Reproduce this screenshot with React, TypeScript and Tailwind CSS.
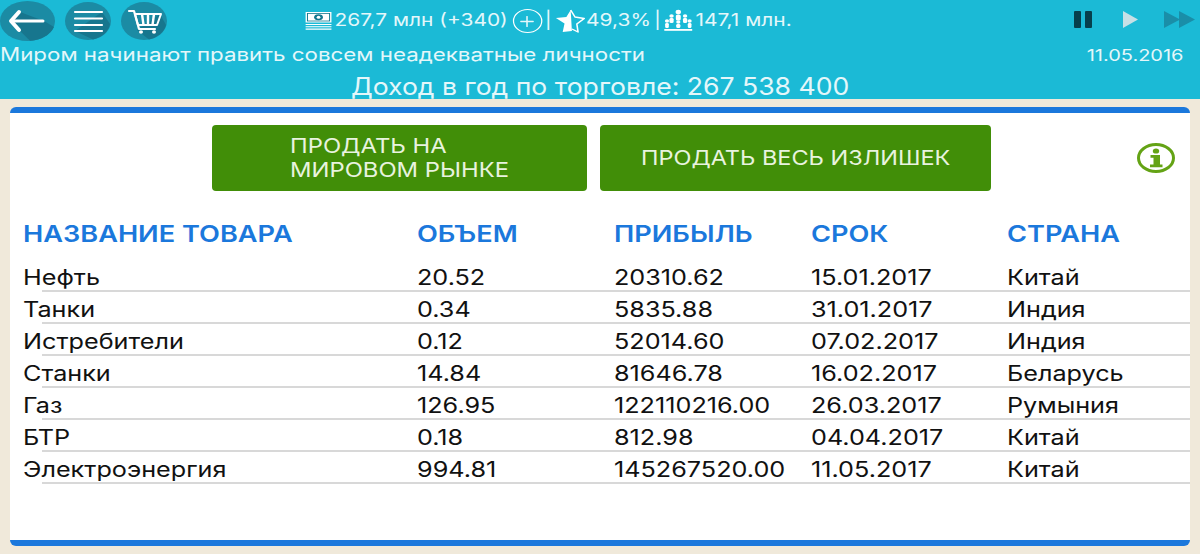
import { Plus } from 'lucide-react';

const rows = [
    ['Нефть', '20.52', '20310.62', '15.01.2017', 'Китай'],
    ['Танки', '0.34', '5835.88', '31.01.2017', 'Индия'],
    ['Истребители', '0.12', '52014.60', '07.02.2017', 'Индия'],
    ['Станки', '14.84', '81646.78', '16.02.2017', 'Беларусь'],
    ['Газ', '126.95', '122110216.00', '26.03.2017', 'Румыния'],
    ['БТР', '0.18', '812.98', '04.04.2017', 'Китай'],
    ['Электроэнергия', '994.81', '145267520.00', '11.05.2017', 'Китай'],
];

const headers = ['НАЗВАНИЕ ТОВАРА', 'ОБЪЕМ', 'ПРИБЫЛЬ', 'СРОК', 'СТРАНА'];

function BackButton() {
    return (
        <svg viewBox="0 0 55 40" className="h-[40px] w-[55px]">
            <ellipse cx="27.500" cy="20" rx="27.500" ry="20" fill="#1b8ba4" />
            <path d="M20 11L44 20L54 26A27.500 20 0 0 1 30 39.800L11 21z" fill="#17768e" />
            <path d="M19 11l-8 9 8 9" fill="none" stroke="white" strokeWidth="4" strokeLinecap="round" strokeLinejoin="round" />
            <path d="M12 20h31" stroke="white" strokeWidth="3" strokeLinecap="round" />
        </svg>
    );
}

function MenuButton() {
    return (
        <svg viewBox="0 0 46 38" className="h-[38px] w-[46px]">
            <ellipse cx="23" cy="19" rx="23" ry="19" fill="#1b8ba4" />
            <path d="M37 10L45 22A23 19 0 0 1 28 37.500L10 29z" fill="#17768e" />
            <path d="M10 10h27M10 16.500h27M10 23h27M10 29h27" stroke="white" strokeWidth="2.200" strokeLinecap="round" />
        </svg>
    );
}

function CartButton() {
    return (
        <svg viewBox="0 0 46 38" className="h-[38px] w-[46px]">
            <ellipse cx="23" cy="19" rx="23" ry="19" fill="#1b8ba4" />
            <path d="M39 12L45 23A23 19 0 0 1 28 37.500L16 28z" fill="#17768e" />
            <path d="M8 9h5l5 18h16" fill="none" stroke="white" strokeWidth="2.200" strokeLinecap="round" strokeLinejoin="round" />
            <path d="M14 12h26l-4 11H17z" fill="none" stroke="white" strokeWidth="2" strokeLinejoin="round" />
            <path d="M21 12l1.500 11M27 12v11M33 12l-1.500 11" stroke="white" strokeWidth="2.400" />
            <ellipse cx="20" cy="30" rx="2" ry="1.700" fill="white" />
            <ellipse cx="33" cy="30" rx="2" ry="1.700" fill="white" />
        </svg>
    );
}

function MoneyIcon() {
    return (
        <svg viewBox="0 0 22 20" className="h-[20px] w-[22px]" fill="none" stroke="white">
            <rect x="0.500" y="1" width="21" height="10.500" fill="white" stroke="none" />
            <rect x="2" y="2.500" width="18" height="7.500" stroke="#14788f" strokeWidth="0.800" />
            <ellipse cx="11" cy="6.200" rx="3.600" ry="3" fill="#14788f" stroke="none" />
            <circle cx="11" cy="6.200" r="1.500" fill="white" stroke="none" />
            <path d="M0.500 13.500h21M0.500 15.800h21M0.500 18.100h21" strokeWidth="1.100" />
        </svg>
    );
}

function StarIcon() {
    return (
        <svg viewBox="0 0 26 24" className="h-[24px] w-[26px]">
            <path d="M13 1l1 21-7.500 1 1.500-8.500L1 9l8.500-1z" fill="white" />
            <path d="M13 1l3.500 7 7.500 1.500-6 5.500 1 8-5-3" fill="none" stroke="white" strokeWidth="1.300" strokeLinejoin="round" />
        </svg>
    );
}

function PeopleIcon() {
    return (
        <svg viewBox="0 0 23 24" className="h-[24px] w-[23px]" fill="white">
            <circle cx="11.500" cy="3" r="2.200" />
            <rect x="9.500" y="5.500" width="4" height="6" rx="1.500" />
            <circle cx="6" cy="7" r="1.800" />
            <rect x="4.300" y="9" width="3.400" height="5" rx="1.300" />
            <circle cx="17" cy="7" r="1.800" />
            <rect x="15.300" y="9" width="3.400" height="5" rx="1.300" />
            <circle cx="2.300" cy="12" r="1.700" />
            <rect x="0.800" y="14" width="3" height="5" rx="1.200" />
            <circle cx="11.500" cy="13" r="1.700" />
            <rect x="9.800" y="15" width="3.400" height="4" rx="1.200" />
            <circle cx="20.700" cy="12" r="1.700" />
            <rect x="19.200" y="14" width="3" height="5" rx="1.200" />
            <rect x="0" y="20" width="23" height="1.800" />
        </svg>
    );
}

function InfoIcon() {
    return (
        <svg viewBox="0 0 38 30" className="h-[30px] w-[38px]">
            <ellipse cx="19" cy="15" rx="17.500" ry="13.500" fill="none" stroke="#64a315" strokeWidth="3" />
            <ellipse cx="19" cy="8" rx="3.200" ry="2.600" fill="#64a315" />
            <path d="M13.500 12h9.500v9.500h2.500v2.800H13v-2.800h3.500v-6.700h-3z" fill="#64a315" />
        </svg>
    );
}

function SpeedControls() {
    return (
        <div className="ml-auto flex items-center pr-[5px] pb-[4px]">
            <svg viewBox="0 0 18 17" className="h-[17px] w-[18px]" fill="#063f4c">
                <rect x="0" y="0" width="7" height="17" rx="1" />
                <rect x="11" y="0" width="7" height="17" rx="1" />
            </svg>
            <svg viewBox="0 0 15 17" className="ml-[31px] h-[17px] w-[15px]" fill="#c6e0e6">
                <path d="M0 0l15 8.500L0 17z" />
            </svg>
            <svg viewBox="0 0 31 17" className="ml-[26px] h-[17px] w-[31px]" fill="#1a8ea8">
                <path d="M0 0l16 8.500L0 17zM15 0l16 8.500L15 17z" />
            </svg>
        </div>
    );
}

export default function App() {
    return (
        <div className="flex h-[554px] w-[1200px] flex-col overflow-hidden bg-[#f0e9da] font-['Inter',sans-serif]">
            {/* Top bar */}
            <div className="h-[99px] bg-[#1bbad6] text-[#e4f7fa]">
                <div className="flex h-[42px] items-center">
                    <div className="flex items-center gap-[10px] pr-[138px]">
                        <BackButton />
                        <MenuButton />
                        <CartButton />
                    </div>
                    <div className="flex origin-left scale-x-[1.23] items-center whitespace-nowrap text-[17px]">
                        <MoneyIcon />
                        <span className="ml-[2px]">267,7 млн (+340)</span>
                        <span className="ml-[4px] flex h-[24px] w-[24px] items-center justify-center rounded-full border-[1.5px] border-white">
                            <Plus className="h-[17px] w-[17px]" strokeWidth={1.8} />
                        </span>
                        <span className="ml-[2px]">|</span>
                        <span className="ml-[2px]"><StarIcon /></span>
                        <span>49,3%</span>
                        <span className="ml-[2.500px]">|</span>
                        <span className="ml-[3px]"><PeopleIcon /></span>
                        <span className="ml-[2px]">147,1 млн.</span>
                    </div>
                    <SpeedControls />
                </div>
                <div className="flex h-[25px] items-center justify-between pr-[17px]">
                    <span className="origin-left scale-x-[1.24] text-[18px]">Миром начинают править совсем неадекватные личности</span>
                    <span className="origin-right scale-x-[1.25] text-[16px]">11.05.2016</span>
                </div>
                <div className="flex h-[32px] items-center justify-center pt-[8px]">
                    <span className="scale-x-[1.107] text-[24px]">Доход в год по торговле: 267 538 400</span>
                </div>
            </div>

            {/* Card */}
            <div className="mx-[10px] mt-[8px] h-[439px] rounded-[6px] border-y-[6px] border-[#1b78dc] bg-white">
                <div className="flex h-[77px] items-start pt-[12px]">
                    <div className="ml-[202px] flex h-[66px] w-[375px] items-center rounded-[4px] bg-[#418e08] pl-[78px] text-[#e8f3df]">
                        <span className="origin-left scale-x-[1.19] text-[20px] leading-[24px]">
                            ПРОДАТЬ НА<br />МИРОВОМ РЫНКЕ
                        </span>
                    </div>
                    <div className="ml-[13px] flex h-[66px] w-[391px] items-center justify-center rounded-[4px] bg-[#418e08] text-[#e8f3df]">
                        <span className="scale-x-[1.175] text-[20px]">ПРОДАТЬ ВЕСЬ ИЗЛИШЕК</span>
                    </div>
                    <div className="ml-[146px] mt-[18px]">
                        <InfoIcon />
                    </div>
                </div>

                <div className="ml-[32px] mt-[27px] grid grid-cols-[374.500px_197px_197px_196px_1fr] text-[23px] font-semibold text-[#1b78dc]">
                    {headers.map((h, i) => (
                        <div key={h} className={i === 0 ? '-ml-[19px] whitespace-nowrap' : 'whitespace-nowrap'}>
                            <span className="inline-block origin-left scale-x-[1.18]">{h}</span>
                        </div>
                    ))}
                </div>

                <div className="mt-[8px]">
                    {rows.map((row) => (
                        <div
                            key={row[0]}
                            className="ml-[32px] grid h-[32px] grid-cols-[374.500px_197px_197px_196px_1fr] items-center border-b-2 border-[#d8d8d8] pt-[2px] text-[21px] text-[#111]"
                        >
                            {row.map((cell, i) => (
                                <div key={i} className={i === 0 ? '-ml-[19px] whitespace-nowrap' : 'whitespace-nowrap'}>
                                    <span className="inline-block origin-left scale-x-[1.2]">{cell}</span>
                                </div>
                            ))}
                        </div>
                    ))}
                </div>
            </div>
        </div>
    );
}
